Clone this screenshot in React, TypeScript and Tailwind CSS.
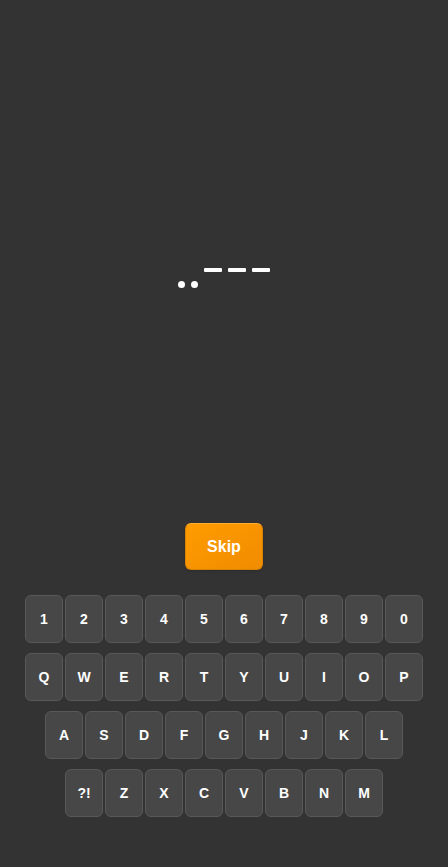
import React from 'react';

const rows = [
  ['1', '2', '3', '4', '5', '6', '7', '8', '9', '0'],
  ['Q', 'W', 'E', 'R', 'T', 'Y', 'U', 'I', 'O', 'P'],
  ['A', 'S', 'D', 'F', 'G', 'H', 'J', 'K', 'L'],
  ['?!', 'Z', 'X', 'C', 'V', 'B', 'N', 'M'],
];

// ..--- (the digit 2)
const code = ['.', '.', '-', '-', '-'];

export default function App() {
  return (
    <div
      className="w-full h-[867px] bg-[#333333] flex flex-col items-center"
      style={{ fontFamily: '"Liberation Sans", Arial, sans-serif' }}
    >
      {/* Morse display */}
      <div className="h-[523px] w-full flex items-center justify-center">
        <div className="flex items-start gap-[6px] mt-[32px]">
          {code.map((c, i) =>
            c === '.' ? (
              <span key={i} className="mt-[13px] w-[7px] h-[7px] rounded-full bg-white" />
            ) : (
              <span key={i} className="w-[18px] h-[4px] rounded-[1px] bg-white" />
            )
          )}
        </div>
      </div>

      {/* Skip */}
      <button className="w-[78px] h-[47px] rounded-[6px] border border-[#d98200] border-t-[#ffb030] bg-gradient-to-br from-[#ff9c00] to-[#f08c00] text-white font-bold text-[16px] shadow-sm">
        Skip
      </button>

      {/* Keyboard */}
      <div className="mt-[25px] flex flex-col items-center gap-[10px]">
        {rows.map((row, r) => (
          <div key={r} className="flex gap-[2px]">
            {row.map((k) => (
              <button
                key={k}
                className="w-[38px] h-[48px] rounded-[6px] bg-[#474747] border border-[#585858] text-white font-bold text-[14px] flex items-center justify-center"
              >
                {k}
              </button>
            ))}
          </div>
        ))}
      </div>
    </div>
  );
}
